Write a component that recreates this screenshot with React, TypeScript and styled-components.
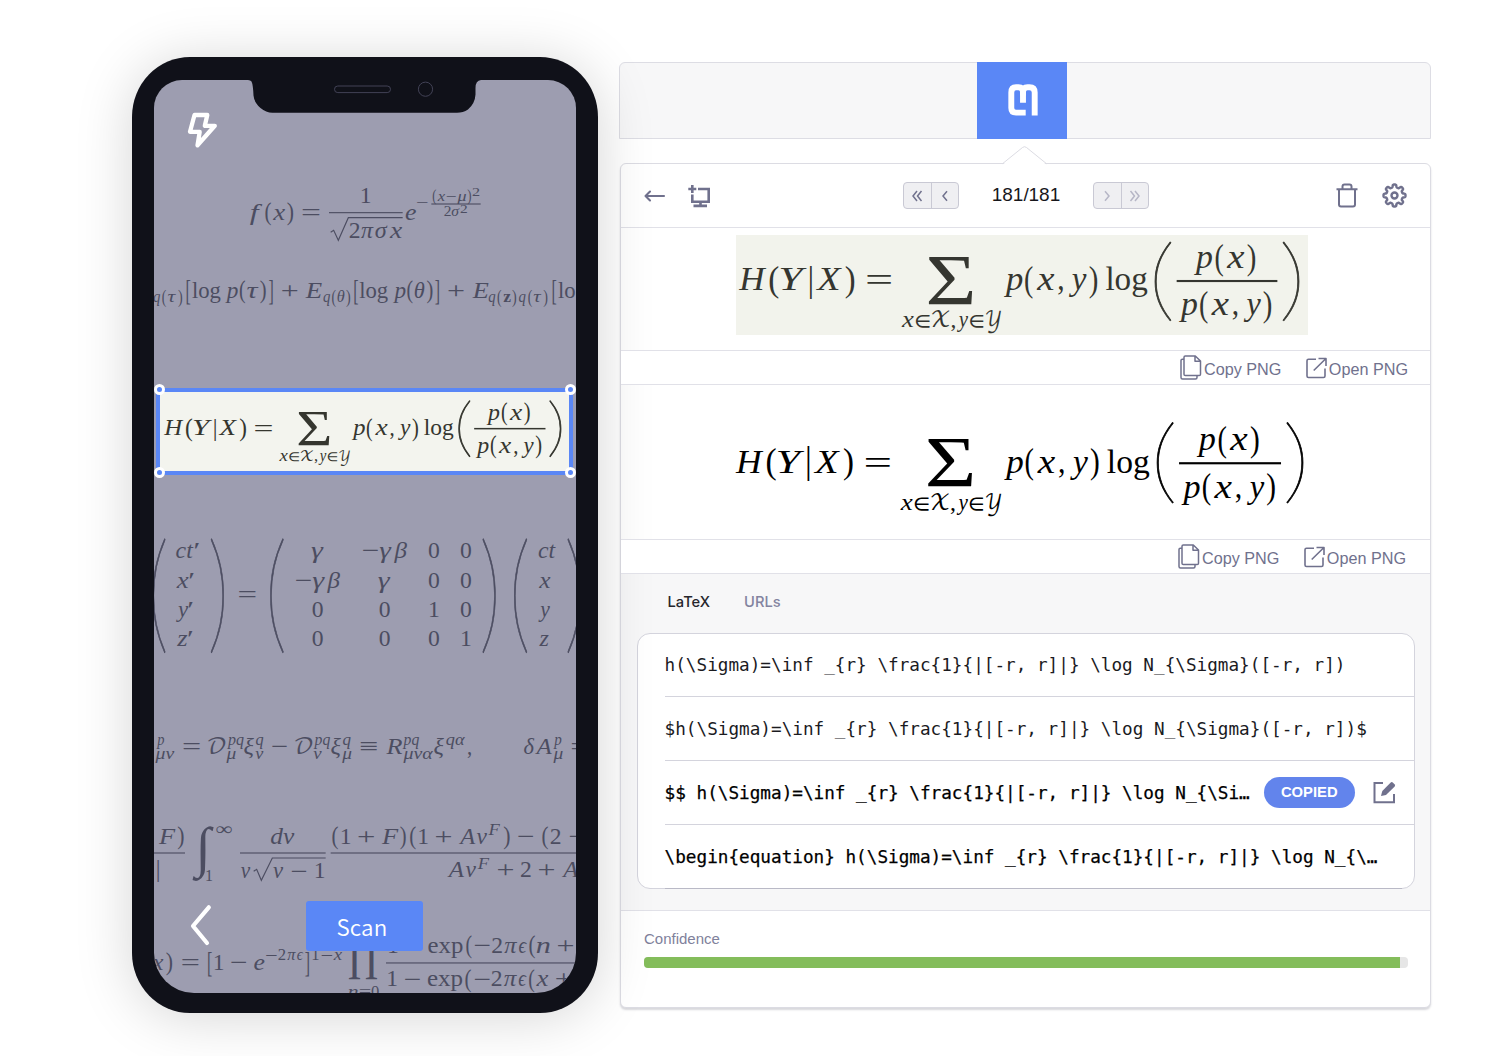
import React from 'react';
import styled, { createGlobalStyle } from 'styled-components';

const blue = '#5a87f6';
const line = '#e1e1e8';
const muted = '#70718d';

const GlobalStyle = createGlobalStyle`
  body { margin: 0; background: #fff; font-family: "Liberation Sans", Arial, sans-serif; }
  *, *::before, *::after { box-sizing: border-box; }
  svg { display: block; }
`;

/* ---------- formula typesetting ---------- */

/** italic, roman, bold, script, light (stretched delimiters) */
type Face = 'i' | 'r' | 'b' | 's' | 'l';
/** text, baseline, left edge, right edge (0 keeps the natural width), size, face */
type Piece = [string, number, number, number, number?, Face?];
/** stretched symbol: text, left, top, right, bottom */
type Tall = [string, number, number, number, number];

const families: Record<Face, string> = {
  i: '"Liberation Serif", "DejaVu Serif", serif',
  r: '"Liberation Serif", "DejaVu Serif", serif',
  b: '"Liberation Serif", "DejaVu Serif", serif',
  s: '"DejaVu Math TeX Gyre", "DejaVu Sans", serif',
  l: 'Lato, "Open Sans", sans-serif',
};
const weights: Record<Face, number> = { i: 400, r: 400, b: 700, s: 400, l: 200 };

const Glyphs = styled.text<{ $face: Face }>`
  font-family: ${p => families[p.$face]};
  font-style: ${p => (p.$face === 'i' ? 'italic' : 'normal')};
  font-weight: ${p => weights[p.$face]};
  stroke: ${p => (p.$face === 'l' ? 'currentColor' : 'none')};
  stroke-width: 0.75px;
  vector-effect: non-scaling-stroke;
  white-space: pre;
`;

interface Ink { left: number; top: number; width: number; height: number }

/** Ink box of a text set at 100 units, relative to its origin on the baseline. */
const inkOf = (() => {
  const cache = new Map<string, Ink>();
  let ctx: CanvasRenderingContext2D | null = null;
  return (text: string, face: Face): Ink => {
    const key = face + text;
    let ink = cache.get(key);
    if (!ink) {
      ctx = ctx ?? document.createElement('canvas').getContext('2d')!;
      ctx.font = `${face === 'i' ? 'italic' : 'normal'} ${weights[face]} 100px ${families[face]}`;
      const m = ctx.measureText(text);
      ink = {
        left: -m.actualBoundingBoxLeft,
        top: -m.actualBoundingBoxAscent,
        width: m.actualBoundingBoxLeft + m.actualBoundingBoxRight,
        height: m.actualBoundingBoxAscent + m.actualBoundingBoxDescent,
      };
      cache.set(key, ink);
    }
    return ink;
  };
})();

const Svg = styled.svg`
  flex: none;
  overflow: hidden;
  fill: currentColor;
`;

interface FormulaProps {
  box: string;
  width: number;
  height: number;
  pieces: Piece[];
  tall?: Tall[];
  rules?: [number, number, number][];
  roots?: string[];
  ruleWidth?: number;
}

function Formula({ box, width, height, pieces, tall = [], rules = [], roots = [], ruleWidth = 3.4 }: FormulaProps) {
  return (
    <Svg width={width} height={height} viewBox={box} preserveAspectRatio="none">
      {pieces.map(([text, y, x1, x2, size = 71, face = 'i'], i) => {
        if (!x2) {
          return <Glyphs key={i} $face={face} x={x1 - 2} y={y} fontSize={size}>{text}</Glyphs>;
        }
        const ink = inkOf(text, face);
        const k = size / 100;
        const fence = '()[]|'.includes(text);
        const limit = face === 'i' || face === 's' ? 1.34 : 3;
        const sx = Math.min((x2 - x1) / (ink.width * k), text === '|' ? 1 : limit);
        const sy = fence ? size / (ink.height * k) : 1;
        const tx = (x1 + x2) / 2 - (ink.left + ink.width / 2) * k * sx;
        const ty = fence ? y - 0.75 * size - ink.top * k * sy : y;
        return (
          <Glyphs key={i} $face={face} fontSize={size} transform={`translate(${tx} ${ty}) scale(${sx} ${sy})`}>
            {text}
          </Glyphs>
        );
      })}
      {tall.map(([text, x1, y1, x2, y2], i) => {
        const face: Face = '()'.includes(text) ? 'l' : 'r';
        const ink = inkOf(text, face);
        const sx = (x2 - x1) / ink.width;
        const sy = (y2 - y1) / ink.height;
        return (
          <Glyphs key={i} $face={face} fontSize={100} transform={`translate(${x1 - ink.left * sx} ${y1 - ink.top * sy}) scale(${sx} ${sy})`}>
            {text}
          </Glyphs>
        );
      })}
      {rules.map(([x1, x2, y], i) => (
        <rect key={i} x={x1} y={y - ruleWidth / 2} width={x2 - x1} height={ruleWidth} />
      ))}
      {roots.map((d, i) => (
        <path key={i} d={d} fill="none" stroke="currentColor" strokeWidth={3.4} />
      ))}
    </Svg>
  );
}

const entropyPieces: Piece[] = [
  ['H', 195, 72, 131], ['(', 195, 138, 157, 71, 'r'], ['Y', 195, 161, 217], ['|', 195, 222, 229, 71, 'r'], ['X', 195, 236, 292],
  [')', 195, 300, 318, 71, 'r'], ['=', 197, 345, 396, 71, 'r'],
  ['x', 273, 418, 444, 48], ['∈', 273, 449, 478, 44, 's'], ['𝒳', 273, 483, 520, 46, 's'], [',', 273, 524, 532, 48, 'r'],
  ['y', 273, 536, 560, 48], ['∈', 273, 564, 592, 44, 's'], ['𝒴', 273, 598, 630, 46, 's'],
  ['p', 195, 636, 675], ['(', 195, 681, 697, 71, 'r'], ['x', 195, 705, 743], [',', 195, 751, 761, 71, 'r'], ['y', 195, 774, 812],
  [')', 195, 818, 834, 71, 'r'], ['log', 195, 853, 941, 71, 'r'],
  ['p', 148, 1040, 1078], ['(', 148, 1086, 1102, 71, 'r'], ['x', 148, 1109, 1147], [')', 148, 1154, 1170, 71, 'r'],
  ['p', 248, 1008, 1046], ['(', 248, 1053, 1069, 71, 'r'], ['x', 248, 1076, 1114], [',', 248, 1122, 1132, 71, 'r'], ['y', 248, 1145, 1182],
  [')', 248, 1188, 1204, 71, 'r'],
];

function Entropy({ box, width, height }: { box: string; width: number; height: number }) {
  return (
    <Formula
      box={box}
      width={width}
      height={height}
      pieces={entropyPieces}
      tall={[['(', 956, 91, 991, 261], [')', 1229, 91, 1264, 261], ['Σ', 475, 125, 570, 225]]}
      rules={[[1003, 1217, 175]]}
      ruleWidth={4.5}
    />
  );
}

const gaussian: Piece[] = [
  ['f', 540, 390, 428], ['(', 540, 436, 453, 71, 'r'], ['x', 540, 458, 495], [')', 540, 502, 519, 71, 'r'], ['=', 540, 547, 598, 71, 'r'],
  ['1', 488, 721, 0, 71, 'r'], ['2', 595, 688, 0, 71, 'r'], ['π', 595, 723, 761], ['σ', 595, 766, 803], ['x', 595, 808, 846],
  ['e', 540, 857, 888], ['−', 504, 891, 923, 48, 'r'],
  ['(', 484, 938, 948, 44, 'r'], ['x', 484, 952, 975, 44], ['−', 484, 979, 1007, 44, 'r'], ['μ', 484, 1012, 1038, 44], [')', 484, 1043, 1053, 44, 'r'],
  ['2', 467, 1058, 1078, 40, 'r'], ['2', 527, 973, 992, 42, 'r'], ['σ', 527, 995, 1019, 42], ['2', 520, 1022, 1041, 36, 'r'],
];

const elbo: Piece[] = [
  ['q', 787, 100, 120, 50], ['(', 787, 127, 138, 50, 'r'], ['τ', 787, 144, 168, 50], [')', 787, 175, 186, 50, 'r'],
  ['[', 773, 200, 211, 71, 'r'], ['log', 773, 217, 302, 71, 'r'], ['p', 773, 316, 353], ['(', 773, 359, 375, 71, 'r'], ['τ', 773, 381, 415],
  [')', 773, 421, 437, 71, 'r'], [']', 773, 447, 458, 71, 'r'], ['+', 773, 486, 532, 71, 'r'], ['E', 773, 556, 606],
  ['q', 787, 610, 630, 50], ['(', 787, 636, 647, 50, 'r'], ['θ', 787, 652, 673, 50], [')', 787, 679, 690, 50, 'r'],
  ['[', 773, 703, 714, 71, 'r'], ['log', 773, 719, 804, 71, 'r'], ['p', 773, 819, 856], ['(', 773, 862, 878, 71, 'r'], ['θ', 773, 884, 913],
  [')', 773, 921, 937, 71, 'r'], [']', 773, 946, 957, 71, 'r'], ['+', 773, 985, 1031, 71, 'r'], ['E', 773, 1057, 1106],
  ['q', 787, 1106, 1126, 50], ['(', 787, 1133, 1144, 50, 'r'], ['z', 787, 1150, 1172, 50, 'b'], [')', 787, 1177, 1188, 50, 'r'],
  ['q', 787, 1197, 1217, 50], ['(', 787, 1225, 1236, 50, 'r'], ['τ', 787, 1241, 1264, 50], [')', 787, 1271, 1282, 50, 'r'],
  ['[', 773, 1298, 1309, 71, 'r'], ['log', 773, 1315, 1400, 71, 'r'],
];

const boost: Piece[] = [
  ['ct', 115, 109, 160], ['′', 115, 164, 178], ['x', 203, 109, 146], ['′', 203, 149, 162], ['y', 290, 108, 145], ['′', 290, 146, 159],
  ['z', 378, 110, 142], ['′', 378, 145, 158], ['=', 245, 297, 347, 71, 'r'],
  ['γ', 115, 514, 551], ['−', 115, 669, 714, 71, 'r'], ['γ', 115, 719, 755], ['β', 115, 762, 801], ['0', 115, 866, 0, 71, 'r'], ['0', 115, 962, 0, 71, 'r'],
  ['−', 203, 468, 513, 71, 'r'], ['γ', 203, 518, 555], ['β', 203, 561, 600], ['γ', 203, 714, 751], ['0', 203, 866, 0, 71, 'r'], ['0', 203, 962, 0, 71, 'r'],
  ['0', 290, 517, 0, 71, 'r'], ['0', 290, 718, 0, 71, 'r'], ['1', 290, 866, 0, 71, 'r'], ['0', 290, 962, 0, 71, 'r'],
  ['0', 378, 517, 0, 71, 'r'], ['0', 378, 718, 0, 71, 'r'], ['0', 378, 866, 0, 71, 'r'], ['1', 378, 962, 0, 71, 'r'],
  ['ct', 115, 1196, 1247], ['x', 203, 1196, 1231], ['y', 290, 1195, 1230], ['z', 378, 1197, 1226],
];

const curvature: Piece[] = [
  ['p', 676, 49, 72, 50], ['μν', 718, 46, 103, 50], ['=', 702, 130, 179, 71, 'r'],
  ['𝒟', 702, 204, 256, 66, 's'], ['pq', 676, 261, 311, 50], ['μ', 718, 259, 287, 50], ['ξ', 702, 313, 342], ['q', 676, 348, 370, 50], ['ν', 718, 346, 370, 50],
  ['−', 702, 397, 441, 71, 'r'], ['𝒟', 702, 465, 517, 66, 's'], ['pq', 676, 521, 570, 50], ['ν', 718, 520, 545, 50], ['ξ', 702, 574, 603], ['q', 676, 609, 632, 50],
  ['μ', 718, 606, 634, 50], ['≡', 702, 662, 711, 71, 'r'], ['R', 702, 739, 787], ['pq', 676, 788, 837, 50], ['μνα', 718, 790, 880, 50],
  ['ξ', 702, 883, 912], ['qα', 676, 919, 975, 50], [',', 702, 983, 993, 71, 'r'],
  ['δ', 702, 1152, 1183], ['A', 702, 1185, 1236], ['p', 676, 1240, 1264, 50], ['μ', 718, 1240, 1268, 50], ['=', 702, 1295, 1344, 71, 'r'],
];

const integral: Piece[] = [
  ['F', 131, 56, 106], [')', 131, 114, 131, 71, 'r'], ['|', 230, 51, 58, 71, 'r'],
  ['∞', 106, 228, 274, 54, 'r'], ['1', 242, 197, 0, 48, 'r'],
  ['dv', 131, 393, 463], ['v', 234, 303, 331], ['v', 234, 400, 430], ['−', 236, 455, 499, 71, 'r'], ['1', 234, 523, 0, 71, 'r'],
  ['(', 131, 577, 594, 71, 'r'], ['1', 131, 601, 0, 71, 'r'], ['+', 131, 655, 702, 71, 'r'], ['F', 131, 725, 775], [')', 131, 781, 797, 71, 'r'],
  ['(', 131, 810, 827, 71, 'r'], ['1', 131, 834, 0, 71, 'r'], ['+', 131, 887, 933, 71, 'r'], ['A', 131, 956, 1006], ['v', 131, 1010, 1041],
  ['F', 104, 1045, 1080, 50], [')', 131, 1092, 1109, 71, 'r'], ['−', 132, 1135, 1180, 71, 'r'], ['(', 131, 1207, 1224, 71, 'r'], ['2', 131, 1231, 0, 71, 'r'],
  ['−', 132, 1289, 1334, 71, 'r'],
  ['A', 232, 922, 973], ['v', 232, 977, 1008], ['F', 206, 1013, 1048, 50], ['+', 232, 1073, 1119, 71, 'r'], ['2', 232, 1142, 0, 71, 'r'],
  ['+', 232, 1196, 1242, 71, 'r'], ['A', 232, 1265, 1315],
];

const product: Piece[] = [
  ['x', 509, 36, 70], [')', 509, 79, 96, 71, 'r'], ['=', 510, 126, 175, 71, 'r'], ['[', 509, 204, 215, 71, 'r'], ['1', 509, 220, 0, 71, 'r'],
  ['−', 510, 274, 319, 71, 'r'], ['e', 509, 343, 374], ['−', 482, 378, 410, 50, 'r'], ['2', 480, 415, 0, 50, 'r'], ['π', 480, 442, 468, 50], ['ϵ', 480, 471, 490, 50],
  [']', 509, 496, 507, 71, 'r'], ['1', 480, 516, 0, 50, 'r'], ['−', 482, 544, 576, 50, 'r'], ['x', 480, 580, 606, 50],
  ['n', 590, 625, 653, 50], ['=', 592, 659, 691, 50, 'r'], ['0', 590, 695, 0, 50, 'r'],
  ['1', 459, 743, 0, 71, 'r'], ['−', 460, 796, 841, 71, 'r'], ['exp', 459, 865, 968, 71, 'r'], ['(', 459, 979, 995, 71, 'r'], ['−', 460, 1004, 1049, 71, 'r'],
  ['2', 459, 1056, 0, 71, 'r'], ['π', 459, 1093, 1132], ['ϵ', 459, 1137, 1161], ['(', 459, 1168, 1185, 71, 'r'], ['n', 459, 1190, 1229], ['+', 459, 1253, 1299, 71, 'r'],
  ['1', 559, 741, 0, 71, 'r'], ['−', 560, 795, 840, 71, 'r'], ['exp', 559, 863, 967, 71, 'r'], ['(', 559, 976, 993, 71, 'r'], ['−', 560, 1004, 1049, 71, 'r'],
  ['2', 559, 1054, 0, 71, 'r'], ['π', 559, 1091, 1131], ['ϵ', 559, 1136, 1160], ['(', 559, 1167, 1183, 71, 'r'], ['x', 559, 1188, 1225], ['+', 559, 1248, 1294, 71, 'r'],
];

/* ---------- page ---------- */

const Page = styled.main`
  display: flex;
  align-items: flex-start;
  width: 1496px;
  height: 1056px;
  padding-left: 132px;
  overflow: hidden;
  background: #fff;
`;

const Phone = styled.section`
  position: relative;
  z-index: 1;
  flex: none;
  width: 465.5px;
  height: 955.5px;
  margin-top: 57px;
  padding: 22.5px 22px 20px;
  border-radius: 58px / 60px;
  background: #101119;
  box-shadow: 0 4px 56px rgba(0, 0, 0, 0.17);
`;

const Screen = styled.div`
  position: relative;
  display: flex;
  flex-direction: column;
  align-items: center;
  width: 422px;
  height: 913px;
  overflow: hidden;
  border-radius: 28px 28px 40px 40px;
  background: #9d9db0;
  color: #4c4d61;
`;

const Gap = styled.div<{ $h: number }>`
  flex: none;
  height: ${p => p.$h}px;
`;

const Notch = styled.svg`
  position: absolute;
  top: 0;
  left: 94px;
`;

const Flash = styled.svg`
  position: absolute;
  top: 31px;
  left: 32px;
`;

const Back = styled.svg`
  position: absolute;
  left: 34px;
  bottom: 45px;
`;

const ScanButton = styled.button`
  position: absolute;
  left: 152px;
  bottom: 41.5px;
  width: 117px;
  height: 50px;
  padding: 0 5px 1px 0;
  border: 0;
  border-radius: 3px;
  background: ${blue};
  color: #fff;
  font: 350 22.4px/48px "Noto Sans CJK SC", "Noto Sans", sans-serif;
  letter-spacing: 0.2px;
`;

const Selection = styled.div`
  position: relative;
  flex: none;
  align-self: flex-start;
  width: 417px;
  height: 87px;
  margin-left: 1.5px;
  border: 4.4px solid ${blue};
  background: #f3f4ee;
  color: #35362f;
`;

const Handle = styled.i<{ $right?: boolean; $bottom?: boolean }>`
  position: absolute;
  ${p => (p.$right ? 'right: -7.5px;' : 'left: -5.5px;')}
  ${p => (p.$bottom ? 'bottom: -7px;' : 'top: -8px;')}
  width: 11px;
  height: 11px;
  border: 3px solid #fff;
  border-radius: 50%;
  background: ${blue};
`;

const Desktop = styled.section`
  flex: none;
  width: 812.5px;
  margin: 62px 0 0 21px;
`;

const MenuBar = styled.header`
  display: flex;
  height: 77px;
  padding-left: 357.5px;
  border: 1px solid #dddde4;
  border-radius: 6px 6px 0 0;
  background: #f7f7f8;
`;

const AppTile = styled.div`
  display: grid;
  place-items: center;
  width: 89.5px;
  height: 77px;
  margin-top: -1px;
  padding: 0 0 2px 2.5px;
  background: ${blue};
`;

const Panel = styled.article`
  position: relative;
  display: flex;
  flex-direction: column;
  width: 811.5px;
  height: 845px;
  margin: 24px 0 0 1px;
  border: 1px solid #dcdce3;
  border-radius: 6px;
  background: #fff;
  box-shadow: 0 2px 2px rgba(60, 60, 80, 0.2);
`;

const Pointer = styled.svg`
  position: absolute;
  top: -19px;
  left: 381px;
`;

const Toolbar = styled.div`
  display: flex;
  align-items: center;
  flex: none;
  height: 64px;
  padding: 0 23.5px 0 23px;
  border-bottom: 1px solid ${line};
  color: ${muted};
`;

const Space = styled.span<{ $w?: number }>`
  flex: ${p => (p.$w ? `0 0 ${p.$w}px` : '1')};
`;

const Pager = styled.div<{ $off?: boolean }>`
  display: flex;
  width: 56px;
  height: 27.5px;
  border: 1.4px solid #c9c9d4;
  border-radius: 4px;
  background: #efeff2;
  color: ${p => (p.$off ? '#b6b6c6' : muted)};
`;

const PagerButton = styled.button`
  display: grid;
  place-items: center;
  flex: 1;
  padding: 0;
  border: 0;
  background: none;
  color: inherit;
  & + & { border-left: 1.4px solid #c9c9d4; }
`;

const Count = styled.span`
  width: 134px;
  padding-bottom: 1px;
  color: #17171c;
  text-align: center;
  font-size: 19px;
  letter-spacing: -0.05px;
`;

const Picture = styled.div<{ $h: number; $top: number; $left: number }>`
  flex: none;
  height: ${p => p.$h}px;
  padding: ${p => p.$top}px 0 0 ${p => p.$left}px;
  color: #000;
`;

const Sample = styled.div`
  width: 572px;
  height: 100px;
  background: #f2f3ec;
  color: #353630;
`;

const Actions = styled.div<{ $right: number }>`
  position: relative;
  z-index: 2;
  display: flex;
  align-items: center;
  justify-content: flex-end;
  flex: none;
  gap: 24.5px;
  height: 35px;
  padding: 0 ${p => p.$right}px 0 0;
  border: solid ${line};
  border-width: 1px 0;
  background: #fff;
`;

const Action = styled.a`
  display: flex;
  align-items: center;
  gap: 2px;
  color: ${muted};
  font-size: 16.2px;
  line-height: 20px;
  span { padding-top: 3px; }
`;

const Results = styled.div`
  flex: none;
  height: 337px;
  padding: 0 15px 0 16.5px;
  border-bottom: 1px solid ${line};
  background: #f7f7f8;
`;

const Tabs = styled.nav`
  display: flex;
  gap: 34px;
  height: 59px;
  padding: 18px 0 0 30.5px;
  font: 500 14.7px/20px Inter, Roboto, sans-serif;
`;

const Tab = styled.span<{ $active?: boolean }>`
  color: ${p => (p.$active ? '#26262c' : '#83839f')};
`;

const List = styled.ul`
  display: flex;
  flex-direction: column;
  height: 256px;
  margin: 0;
  padding: 0 0 0 26.6px;
  list-style: none;
  border: 1px solid #d4d4dd;
  border-radius: 13px;
  background: #fff;
`;

const Item = styled.li<{ $strong?: boolean }>`
  display: flex;
  align-items: center;
  flex: none;
  height: 64px;
  border-bottom: 1px solid #d4d4dd;
  color: ${p => (p.$strong ? '#000' : '#1b1b1f')};
  -webkit-text-stroke: ${p => (p.$strong ? '0.25px #000' : '0')};
  font: 17.68px/24px "DejaVu Sans Mono", monospace;
  white-space: pre;
  &:first-child { height: 63px; }
  &:last-child { border-bottom-color: #b9b9c6; margin-right: 12px; }
`;

const Badge = styled.span`
  width: 91px;
  margin-left: 14px;
  border-radius: 16px;
  background: #6284ec;
  color: #fff;
  text-align: center;
  -webkit-text-stroke: 0;
  font: 700 14.8px/31.5px "Liberation Sans", Arial, sans-serif;
`;

const EditIcon = styled.svg`
  margin-left: 18.5px;
  color: ${muted};
`;

const Confidence = styled.div`
  padding: 18px 22px 0 23.5px;
  color: #80819b;
  font-size: 15px;
  line-height: 20px;
`;

const Track = styled.div`
  height: 11px;
  margin-top: 8px;
  overflow: hidden;
  border-radius: 4px;
  background: #e6e6e6;
`;

const Fill = styled.div<{ $value: number }>`
  width: ${p => p.$value}%;
  height: 100%;
  background: #84bd5b;
`;

const Chevrons = ({ right, double }: { right?: boolean; double?: boolean }) => (
  <svg width="16" height="16" viewBox="0 0 16 16" fill="none" stroke="currentColor" strokeWidth="1.5">
    <g transform={right ? 'translate(16 0) scale(-1 1)' : undefined}>
      {double ? <path d="M8 3L4 8l4 5M12.500 3L8.500 8l4 5" /> : <path d="M10 3.200L6 8l4 4.800" />}
    </g>
  </svg>
);

const CopyIcon = () => (
  <svg width="22" height="26" viewBox="0 0 22 26" fill="none" stroke="currentColor" strokeWidth="1.5" strokeLinejoin="round">
    <path d="M5.300 1H15.300L20.500 6V19.200Q20.500 20.500 19.200 20.500H5.300Q4 20.500 4 19.200V2.300Q4 1 5.300 1ZM15 1.200V6.200H20.300" />
    <path d="M4 4.300H2.300Q1 4.300 1 5.600V22.500Q1 24 2.500 24H15.500Q17 24 17 22.500V20.500" />
  </svg>
);

const OpenIcon = () => (
  <svg width="21" height="22" viewBox="0 0 21 22" fill="none" stroke="currentColor" strokeWidth="1.6" strokeLinejoin="round">
    <path d="M10 2.300H2.500Q1 2.300 1 3.800V19Q1 20.500 2.500 20.500H17.500Q19 20.500 19 19V11.500" />
    <path d="M12.500 1.500H20V9M19.700 1.800L7.700 13.500" />
  </svg>
);

const gearPath = (() => {
  const pts: string[] = [];
  for (let i = 0; i <= 200; i++) {
    const a = (i / 200) * Math.PI * 2;
    const r = 9.6 + 1.4 * Math.tanh(2.6 * Math.cos(8 * a));
    pts.push(`${(12.5 + r * Math.sin(a)).toFixed(2)} ${(12.5 - r * Math.cos(a)).toFixed(2)}`);
  }
  return `M${pts.join('L')}Z`;
})();

const PngActions = ({ right }: { right: number }) => (
  <Actions $right={right}>
    <Action><CopyIcon /><span>Copy PNG</span></Action>
    <Action><OpenIcon /><span>Open PNG</span></Action>
  </Actions>
);

export default function App() {
  return (
    <>
      <GlobalStyle />
      <Page>
        <Phone>
          <Screen>
            <Gap $h={100.5} />
            <Formula box="102 420 1266 210" width={422} height={70} pieces={gaussian}
              rules={[[627, 848, 518], [934, 1082, 492]]} roots={['M632 577L641 571L655 601L685 533H848']} />
            <Gap $h={20} />
            <Formula box="102 690 1266 135" width={422} height={45} pieces={elbo} />
            <Gap $h={72.5} />
            <Selection>
              <Entropy box="60.500 65 1224.600 234.600" width={408.2} height={78.2} />
              <Handle /><Handle $right /><Handle $bottom /><Handle $right $bottom />
            </Selection>
            <Gap $h={60.5} />
            <Formula box="42 45 1266 366" width={422} height={122} pieces={boost}
              tall={[['(', 38, 55, 76, 402], [')', 213, 55, 252, 402], ['(', 390, 55, 430, 402], [')', 1028, 55, 1067, 402], ['(', 1122, 55, 1161, 402], [')', 1283, 55, 1322, 402]]} />
            <Gap $h={73} />
            <Formula box="42 630 1266 120" width={422} height={40} pieces={curvature} />
            <Gap $h={50} />
            <Formula box="42 60 1266 195" width={422} height={65} pieces={integral}
              tall={[['∫', 157, 77, 222, 242]]}
              rules={[[42, 135, 159], [300, 557, 159], [572, 1310, 159]]} roots={['M341 214L350 208L364 241L397 174H557']} />
            <Gap $h={45} />
            <Formula box="42 390 1266 188" width={422} height={62.6} pieces={product}
              tall={[['Π', 626, 440, 712, 540]]} rules={[[738, 1310, 489]]} />

            <Notch width="234" height="34" viewBox="248 79.500 234 34">
              <path d="M248 79H481V79.500Q475.500 80 475.500 87.500V94Q475 103 468 109Q463 112.300 457 112.300H272.500Q266 112 260.500 107.500Q254 102 253.500 95Q253 84 251.500 81Q250.500 79.500 248 79.500Z" fill="#101119" />
              <rect x="334.500" y="85.500" width="56" height="6.600" rx="3.300" fill="none" stroke="#424256" />
              <circle cx="425.500" cy="88.700" r="7.100" fill="none" stroke="#424256" />
            </Notch>
            <Flash width="34" height="38" viewBox="186 111.500 34 38">
              <path d="M194.500 115.500H207.300L204.800 126.300H214.800L197.500 145.800L199.700 132.300H190Z" fill="none" stroke="#fff" strokeWidth="4.300" strokeLinejoin="round" />
            </Flash>
            <Back width="26" height="46" viewBox="188 902 26 46">
              <path d="M208.800 907.300L193 926L207 943" fill="none" stroke="#fff" strokeWidth="4.200" strokeLinecap="round" strokeLinejoin="round" />
            </Back>
            <ScanButton>Scan</ScanButton>
          </Screen>
        </Phone>

        <Desktop>
          <MenuBar>
            <AppTile>
              <svg width="30" height="32" viewBox="1008 83.500 30 32" fill="none" stroke="#fff" strokeWidth="5.900">
                <path d="M1025.700 112.100H1016Q1011.300 112.100 1011.300 107.500V92Q1011.300 86.800 1016 86.800H1018.500Q1023 86.800 1023 91.500V102.300" />
                <path d="M1023 95V91.500Q1023 86.800 1027.500 86.800H1029.500Q1034.700 86.800 1034.700 92V115" />
              </svg>
            </AppTile>
          </MenuBar>
          <Panel>
            <Pointer width="46" height="20" viewBox="0 0 46 20">
              <path d="M1 19.500L20.500 2.500Q22.500 .800 24.500 2.500L44 19.500V20H1Z" fill="#fff" />
              <path d="M.500 18.700L20.500 2.500Q22.500 .800 24.500 2.500L44.500 18.700" fill="none" stroke="#dcdce3" />
            </Pointer>
            <Toolbar>
              <svg width="22" height="12" viewBox="0 0 22 12" fill="none" stroke="currentColor" strokeWidth="2.100" strokeLinecap="round" strokeLinejoin="round">
                <path d="M20 6H1.500M6 1.500L1.500 6l4.500 4.500" />
              </svg>
              <Space $w={22} />
              <svg width="23" height="24" viewBox="0 0 23 24" fill="none" stroke="currentColor" strokeWidth="2.600">
                <path d="M4.300 1v8M.300 5h8" />
                <path d="M10 5H20.700V17.700H4.300V10.500" />
                <path d="M12.500 18V21.500M5.500 21.900H19" />
              </svg>
              <Space $w={192.5} />
              <Pager><PagerButton><Chevrons double /></PagerButton><PagerButton><Chevrons /></PagerButton></Pager>
              <Count>181/181</Count>
              <Pager $off><PagerButton><Chevrons right /></PagerButton><PagerButton><Chevrons right double /></PagerButton></Pager>
              <Space />
              <svg width="22" height="25" viewBox="0 0 22 25" fill="none" stroke="currentColor" strokeWidth="2" strokeLinejoin="round">
                <path d="M.500 6.300H21.500M3 6.500V21.500Q3 23.500 5 23.500H17Q19 23.500 19 21.500V6.500M6.500 6V3.500Q6.500 1.500 8.500 1.500H13.500Q15.500 1.500 15.500 3.500V6" />
              </svg>
              <Space $w={24} />
              <svg width="25" height="25" viewBox="0 0 25 25" fill="none" stroke="currentColor" strokeWidth="2.400" strokeLinejoin="round">
                <path d={gearPath} />
                <circle cx="12.500" cy="12.500" r="3" />
              </svg>
            </Toolbar>
            <Picture $h={122} $top={7} $left={115}>
              <Sample><Entropy box="66.600 77.300 1215.500 212.300" width={572} height={100} /></Sample>
            </Picture>
            <PngActions right={22} />
            <Picture $h={154} $top={31} $left={111}>
              <Entropy box="65 76 1217 220" width={580} height={105} />
            </Picture>
            <PngActions right={24} />
            <Results>
              <Tabs><Tab $active>LaTeX</Tab><Tab>URLs</Tab></Tabs>
              <List>
                <Item>{'h(\\Sigma)=\\inf _{r} \\frac{1}{|[-r, r]|} \\log N_{\\Sigma}([-r, r])'}</Item>
                <Item>{'$h(\\Sigma)=\\inf _{r} \\frac{1}{|[-r, r]|} \\log N_{\\Sigma}([-r, r])$'}</Item>
                <Item $strong>
                  {'$$ h(\\Sigma)=\\inf _{r} \\frac{1}{|[-r, r]|} \\log N_{\\Si…'}
                  <Badge>COPIED</Badge>
                  <EditIcon width="23" height="23" viewBox="0 0 23 23">
                    <path d="M10 2H1.500V21.300H21V13" fill="none" stroke="currentColor" strokeWidth="2" />
                    <path d="M8 15l1.300-5L17.500 1.700Q18.700.500 20 1.700L21.500 3.200Q22.700 4.500 21.500 5.700L13 14Z" fill="currentColor" />
                  </EditIcon>
                </Item>
                <Item $strong>{'\\begin{equation} h(\\Sigma)=\\inf _{r} \\frac{1}{|[-r, r]|} \\log N_{\\…'}</Item>
              </List>
            </Results>
            <Confidence>
              Confidence
              <Track><Fill $value={99} /></Track>
            </Confidence>
          </Panel>
        </Desktop>
      </Page>
    </>
  );
}
